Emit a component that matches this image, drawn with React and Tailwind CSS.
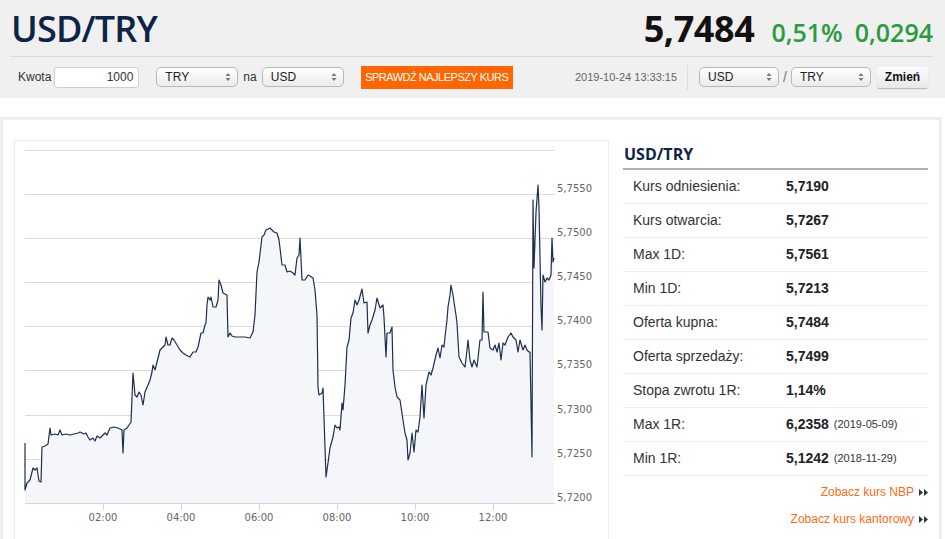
import React from 'react';

const pts = [[25,443],[25,490],[27,483],[30,480],[33,468],[35,470],[37,468],[39,481],[41,482],[42,447],[45,446],[48,444],[50,428],[51,435],[55,434],[58,435],[60,430],[62,435],[66,434],[70,435],[74,434],[78,433],[80,432],[84,434],[86,433],[88,437],[90,440],[93,438],[95,441],[97,436],[100,438],[103,435],[105,433],[107,435],[110,428],[114,427],[118,428],[122,430],[123,453],[124,430],[127,428],[131,422],[133,373],[135,395],[137,397],[139,392],[141,395],[143,405],[145,392],[148,385],[150,380],[152,372],[153,365],[155,370],[157,362],[160,350],[163,347],[165,345],[166,337],[168,345],[170,345],[172,338],[174,340],[177,345],[180,350],[183,353],[186,355],[190,357],[193,352],[196,352],[198,347],[201,333],[203,333],[205,325],[206,323],[207,305],[208,297],[210,300],[211,297],[213,307],[216,307],[218,300],[219,280],[221,285],[223,293],[227,295],[228,337],[230,333],[232,336],[235,337],[240,337],[245,337],[250,338],[253,332],[255,315],[257,272],[259,262],[262,237],[264,235],[266,230],[268,229],[270,228],[272,230],[274,232],[277,233],[279,240],[280,248],[282,265],[285,265],[287,272],[290,271],[293,273],[295,275],[297,258],[299,255],[300,238],[302,280],[305,280],[308,275],[310,276],[313,278],[315,290],[317,315],[318,387],[319,395],[322,393],[323,388],[326,477],[328,463],[330,448],[333,437],[335,425],[337,428],[339,427],[340,430],[342,403],[343,410],[345,385],[347,347],[349,340],[351,318],[353,313],[355,300],[357,305],[359,300],[362,289],[364,303],[367,302],[368,333],[370,325],[372,320],[375,310],[377,298],[380,308],[383,305],[384,317],[386,357],[387,333],[390,333],[392,327],[393,370],[395,387],[397,397],[400,400],[403,420],[405,433],[407,440],[408,460],[410,453],[412,433],[414,452],[416,430],[418,432],[420,417],[422,385],[424,418],[426,385],[429,372],[431,375],[433,368],[436,355],[438,348],[440,358],[442,345],[444,347],[445,337],[447,320],[448,307],[450,295],[451,285],[453,295],[454,302],[456,315],[457,323],[459,357],[462,363],[465,367],[467,350],[468,340],[470,360],[472,367],[474,360],[477,367],[480,340],[482,340],[483,292],[484,332],[488,332],[490,348],[493,350],[495,345],[497,352],[499,343],[501,360],[503,343],[505,345],[508,337],[511,333],[513,337],[516,340],[518,352],[520,340],[523,350],[525,345],[527,350],[529,352],[530,352],[532,457],[533,200],[534,268],[536,212],[538,185],[539,208],[541,307],[542,330],[543,275],[545,282],[547,278],[549,280],[551,275],[552,238],[553,262],[554,258]];

const grid = [150, 194, 238, 282, 326, 370, 415, 459];
const yLabels = [['5,7550', 194], ['5,7500', 238], ['5,7450', 282], ['5,7400', 326], ['5,7350', 370], ['5,7300', 415], ['5,7250', 459], ['5,7200', 503]];
const xLabels = [['02:00', 103], ['04:00', 181], ['06:00', 259], ['08:00', 337], ['10:00', 415], ['12:00', 493]];

const stats = [
  ['Kurs odniesienia:', '5,7190'],
  ['Kurs otwarcia:', '5,7267'],
  ['Max 1D:', '5,7561'],
  ['Min 1D:', '5,7213'],
  ['Oferta kupna:', '5,7484'],
  ['Oferta sprzedaży:', '5,7499'],
  ['Stopa zwrotu 1R:', '1,14%'],
  ['Max 1R:', '6,2358', '(2019-05-09)'],
  ['Min 1R:', '5,1242', '(2018-11-29)'],
];

function Select({ value, w }) {
  return (
    <div className={`${w} h-[20px] flex items-center justify-between pl-[8px] pr-[6px] border border-[#b8b8b8] rounded-[5px] bg-gradient-to-b from-white to-[#ebebeb] text-[12px] text-[#222]`}>
      <span>{value}</span>
      <svg width="6" height="10" viewBox="0 0 6 10">
        <path d="M3 1 L5.5 4 L0.5 4 Z M3 9 L0.5 6 L5.5 6 Z" fill="#777" />
      </svg>
    </div>
  );
}

function Arrows() {
  return (
    <svg width="9" height="7" viewBox="0 0 9 7" className="ml-[5px]">
      <path d="M0 0 L4 3.5 L0 7 Z M5 0 L9 3.5 L5 7 Z" fill="#333" />
    </svg>
  );
}

function Chart() {
  const line = pts.map((p) => p.join(',')).join(' ');
  const area = `M25,503 L${pts.map((p) => p.join(',')).join(' L')} L554,503 Z`;
  return (
    <svg width="593" height="400" viewBox="15 141 593 400" className="block">
      {grid.map((y) => (
        <line key={y} x1="25" x2="555" y1={y + 0.5} y2={y + 0.5} stroke="#dcdcdc" strokeWidth="1" />
      ))}
      <path d={area} fill="#f4f6f9" />
      <polyline points={line} fill="none" stroke="#1c2f4f" strokeWidth="1.2" strokeLinejoin="round" />
      <line x1="25" x2="555" y1="503.5" y2="503.5" stroke="#ccd6eb" strokeWidth="1" />
      {xLabels.map(([t, x]) => (
        <g key={t}>
          <line x1={x + 0.5} x2={x + 0.5} y1="503" y2="510" stroke="#ccd6eb" strokeWidth="1" />
          <text x={x} y="521" textAnchor="middle" fontSize="10" fill="#666" fontFamily="'DejaVu Sans', sans-serif">{t}</text>
        </g>
      ))}
      {yLabels.map(([t, y]) => (
        <text key={t} x="557" y={y - 2} fontSize="10" fill="#666" fontFamily="'DejaVu Sans', sans-serif">{t}</text>
      ))}
    </svg>
  );
}

export default function App() {
  return (
    <div className="w-[945px] h-[539px] overflow-hidden bg-white font-['Liberation_Sans',Arial,sans-serif]">
      {/* header */}
      <div className="bg-[#f0f0f0] h-[98px]">
        <div className="mx-[10px] w-[923px]">
          <div className="h-[57px] flex items-center justify-between border-b border-[#dadada] font-['Open_Sans',sans-serif]">
            <h1 className="pl-[1px] pt-[2px] text-[36px] font-semibold text-[#0e2446] tracking-[-0.8px]">USD/TRY</h1>
            <div className="flex items-baseline pt-[2px]">
              <span className="text-[36px] font-bold text-[#111] tracking-[-0.4px]">5,7484</span>
              <span className="ml-[17px] text-[25px] font-semibold text-[#2c9a41]">0,51%</span>
              <span className="ml-[12px] text-[25px] font-semibold text-[#2c9a41]">0,0294</span>
            </div>
          </div>
          <div className="h-[40px] flex items-center text-[12px] text-[#333]">
            <span className="pl-[8px]">Kwota</span>
            <div className="ml-[3px] w-[85px] h-[21px] bg-white border border-[#cfcfcf] rounded-[3px] flex items-center justify-end pr-[5px] text-[12px]">1000</div>
            <div className="ml-[17px]"><Select value="TRY" w="w-[82px]" /></div>
            <span className="ml-[5px]">na</span>
            <div className="ml-[5px]"><Select value="USD" w="w-[82px]" /></div>
            <button className="ml-[17px] w-[152px] h-[23px] bg-[#ff6600] text-white text-[11px] tracking-[-0.5px]">SPRAWDŹ NAJLEPSZY KURS</button>
            <div className="flex-1" />
            <span className="text-[11px] text-[#666]">2019-10-24 13:33:15</span>
            <div className="ml-[10px] w-px h-[25px] bg-[#dcdcdc]" />
            <div className="ml-[11px]"><Select value="USD" w="w-[80px]" /></div>
            <span className="mx-[4px] text-[14px] text-[#777]">/</span>
            <Select value="TRY" w="w-[80px]" />
            <button className="ml-[6px] w-[51px] h-[21px] rounded-[2px] bg-gradient-to-b from-[#fbfbfb] to-[#e8e8e8] shadow-[0_1px_1px_rgba(0,0,0,0.25)] text-[12px] font-bold text-[#111] mr-[5px]">Zmień</button>
          </div>
        </div>
      </div>

      {/* card */}
      <div className="mt-[19px] w-[942px] h-[430px] border-[3px] border-b-0 border-[#eeeeee]">
        <div className="flex pl-[11px] pt-[20px]">
          <div className="w-[595px] h-[420px] border border-[#ececec]">
            <Chart />
          </div>
          <div className="ml-[14px] w-[305px]">
            <div className="h-[30px] flex items-center pl-[1px] border-b-2 border-[#b0b0b0] font-['Open_Sans',sans-serif] text-[16px] font-bold text-[#0e2446]">USD/TRY</div>
            {stats.map(([label, value, date]) => (
              <div key={label} className="h-[34px] flex items-center border-b border-[#eeeeee] text-[14px]">
                <span className="pl-[10px] w-[163px] text-[#333]">{label}</span>
                <span className="font-bold text-[#222]">{value}</span>
                {date && <span className="ml-[5px] text-[11px] text-[#333]">{date}</span>}
              </div>
            ))}
            <div className="mt-[7px] h-[18px] flex items-center justify-end text-[12px] text-[#ff6a13]">
              Zobacz kurs NBP<Arrows />
            </div>
            <div className="mt-[9px] h-[18px] flex items-center justify-end text-[12px] text-[#ff6a13]">
              Zobacz kurs kantorowy<Arrows />
            </div>
          </div>
        </div>
      </div>
    </div>
  );
}
